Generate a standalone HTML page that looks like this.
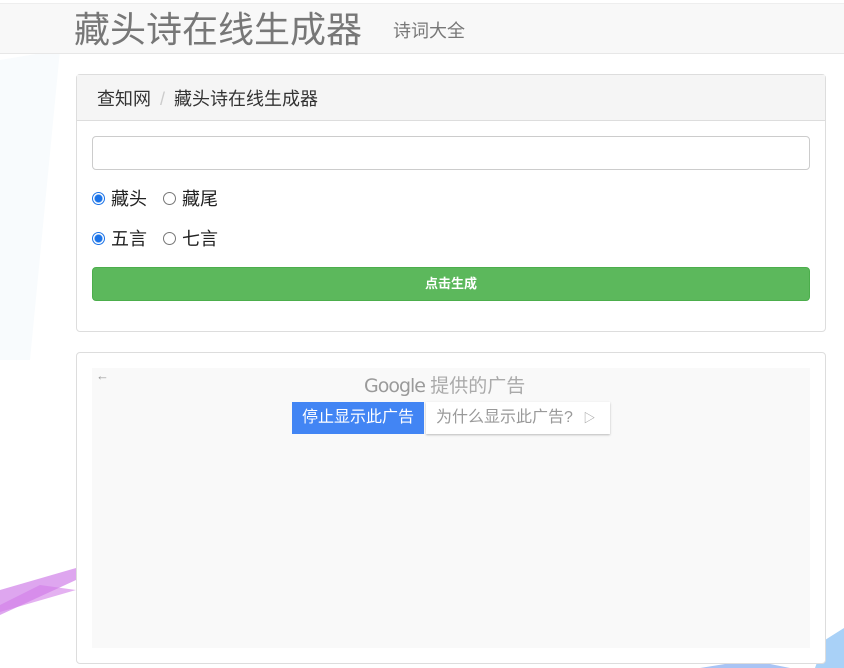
<!DOCTYPE html>
<html><head><meta charset="utf-8"><style>
*{box-sizing:border-box;margin:0;padding:0}
body{width:844px;height:668px;overflow:hidden;background:#fff;font-family:"Liberation Sans","Noto Sans CJK SC",sans-serif;position:relative}
.bg{position:absolute;left:0;top:0}
.nav{position:absolute;left:0;top:3px;width:844px;height:51px;background:#f8f8f8;border-bottom:1px solid #e7e7e7;border-top:1px solid #eee}
.brand{position:absolute;left:74px;top:3px;font-size:36px;color:#777;line-height:46px}
.link{position:absolute;left:393px;top:13px;font-size:18px;color:#777}
.panel{position:absolute;left:76px;width:750px;background:#fff;border:1px solid #ddd;border-radius:4px}
.ph{height:46px;background:#f5f5f5;border-bottom:1px solid #ddd;padding:10px 20px;font-size:18px;color:#333}
.ph .s{color:#ccc;margin:0 9px}
.inp{position:absolute;left:15px;top:61px;width:718px;height:34px;border:1px solid #ccc;border-radius:4px}
.r{position:absolute;left:15px;font-size:18px;color:#222;display:flex;align-items:center}
.rad{width:13px;height:13px;border-radius:50%;border:1px solid #777;display:inline-block;margin-right:6px}
.on{border:1px solid #1a73e8;background:radial-gradient(circle,#1a73e8 3.5px,#fff 4.5px)}
.btn{position:absolute;left:15px;top:192px;width:718px;height:34px;background:#5cb85c;border:1px solid #4cae4c;border-radius:4px;color:#fff;font-size:13px;font-weight:bold;text-align:center;line-height:32px}
.ad{position:absolute;left:15px;top:15px;width:718px;height:280px;background:#f9f9f9}
</style></head><body>
<svg class="bg" width="844" height="668">
<polygon points="0,60 60,50 30,360 0,360" fill="#f8fbfd"/>
<polygon points="0,590 76,568 76,580 0,615" fill="#dea6ef"/>
<polygon points="0,605 40,585 76,590 0,612" fill="#d27de8" opacity=".6"/>
<polygon points="825,640 844,628 844,668 815,668" fill="#a9d1f7"/>
<polygon points="750,660 790,668 700,668" fill="#a9c4f4"/>
</svg>
<div class="nav"><div class="brand">藏头诗在线生成器</div><div class="link">诗词大全</div></div>
<div class="panel" style="top:74px;height:258px">
<div class="ph">查知网<span class="s">/</span>藏头诗在线生成器</div>
<div class="inp"></div>
<div class="r" style="top:110px"><span class="rad on"></span>藏头<span class="rad" style="margin-left:16px"></span>藏尾</div>
<div class="r" style="top:150px"><span class="rad on"></span>五言<span class="rad" style="margin-left:16px"></span>七言</div>
<div class="btn">点击生成</div>
</div>
<div class="panel" style="top:352px;height:312px">
<div class="ad">
<div style="position:absolute;left:4px;top:0;color:#999;font-size:13px">←</div>
<div style="position:absolute;left:272px;top:3px;font-size:19px;color:#aaa"><span style="font-family:'DejaVu Sans';color:#9a9a9a;letter-spacing:-1px">Google</span> 提供的广告</div>
<div style="position:absolute;left:200px;top:34px;width:132px;height:32px;background:#4285f4;color:#fff;font-size:16px;line-height:32px;text-align:center">停止显示此广告</div>
<div style="position:absolute;left:334px;top:34px;width:184px;height:32px;background:#fff;box-shadow:0 1px 2px #bbb;color:#999;font-size:16px;line-height:32px;padding-left:10px">为什么显示此广告? <span style="font-size:12px;margin-left:6px">▷</span></div>
</div>
</div>
</body></html>
